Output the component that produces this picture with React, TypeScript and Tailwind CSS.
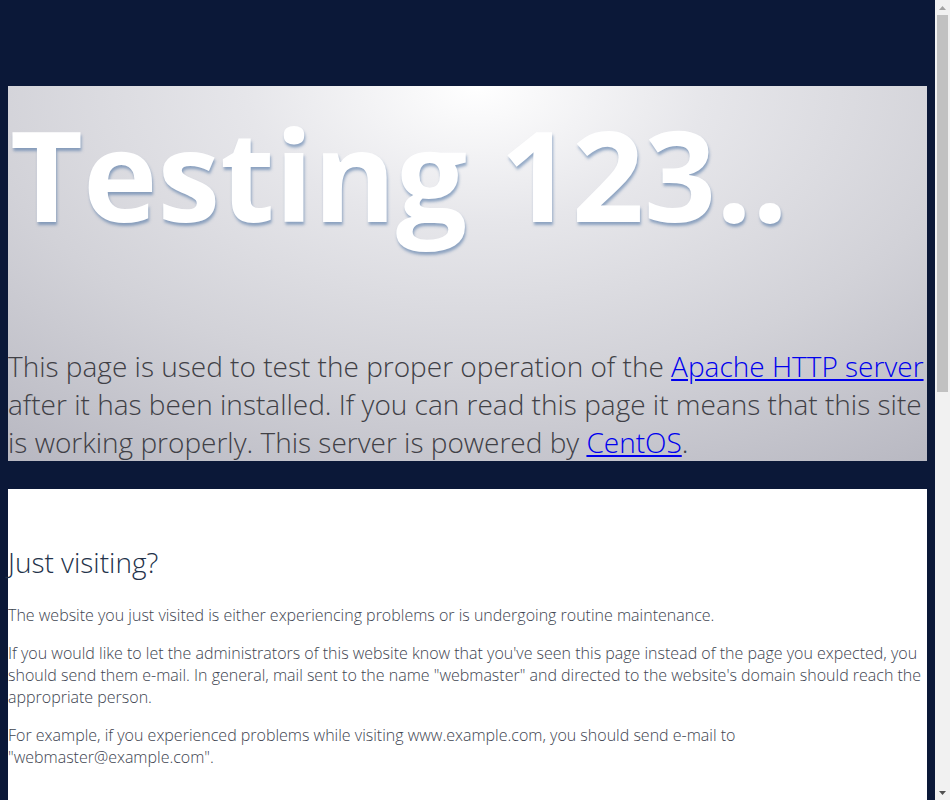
import React from "react";

function FakeScrollbar() {
  return (
    <div className="fixed right-0 top-0 flex h-screen w-[15px] flex-col items-center bg-[#f1f1f1]">
      <div className="flex h-[15px] w-full items-center justify-center">
        <svg width="7" height="4" viewBox="0 0 7 4">
          <polygon points="0,4 3.5,0 7,4" fill="#a3a3a3" />
        </svg>
      </div>
      <div className="h-[377px] w-[11px] bg-[#c1c1c1]" />
      <div className="flex-1" />
      <div className="flex h-[15px] w-full items-center justify-center">
        <svg width="7" height="4" viewBox="0 0 7 4">
          <polygon points="0,0 7,0 3.5,4" fill="#505050" />
        </svg>
      </div>
    </div>
  );
}

export default function App() {
  return (
    <div className="min-h-screen bg-[#0b1838] font-['Open_Sans',sans-serif] font-light">
      <div className="mr-[15px] px-2 pt-[86px] pb-[60px]">
        <div className="bg-[radial-gradient(ellipse_90%_130%_at_51%_0%,#ffffff_0%,#e6e6ea_28%,#d2d2d8_60%,#b4b4be_100%)] pt-[2px]">
          <h1 className="m-0 pl-[2px] text-[126px] leading-[170px] font-bold text-white [text-shadow:1px_3px_3px_rgba(70,110,160,0.55)] whitespace-nowrap">
            Testing 123..
          </h1>
          <p className="mt-[89px] mb-0 text-[28px] leading-[38px] text-[#404046]">
            This page is used to test the proper operation of the{" "}
            <a href="#" className="text-[#0000ee] underline">Apache HTTP server</a> after it has been
            installed. If you can read this page it means that this site is working properly. This
            server is powered by <a href="#" className="text-[#0000ee] underline">CentOS</a>.
          </p>
        </div>
        <div className="mt-[28px] bg-white pt-[52px] pb-[40px] text-[16px] leading-[22px] text-[#3d4450]">
          <h2 className="m-0 text-[28px] leading-normal font-light text-[#23324a]">Just visiting?</h2>
          <p className="mt-[21px] mb-4">
            The website you just visited is either experiencing problems or is undergoing routine maintenance.
          </p>
          <p className="mb-4">
            If you would like to let the administrators of this website know that you've seen this page
            instead of the page you expected, you should send them e-mail. In general, mail sent to the
            name "webmaster" and directed to the website's domain should reach the appropriate person.
          </p>
          <p className="mb-4">
            For example, if you experienced problems while visiting www.example.com, you should send
            e-mail to "webmaster@example.com".
          </p>
          <h2 className="mt-[60px] mb-0 text-[28px] leading-normal font-light text-[#23324a]">
            Are you the Administrator?
          </h2>
          <p className="mt-[21px] mb-4">
            You should add your website content to the directory /var/www/html/.
          </p>
          <p className="mb-4">
            To prevent this page from ever being used, follow the instructions in the file
            /etc/httpd/conf.d/welcome.conf.
          </p>
          <h2 className="mt-[60px] mb-0 text-[28px] leading-normal font-light text-[#23324a]">
            Promoting Apache and CentOS
          </h2>
          <p className="mt-[21px] mb-4">
            You are free to use the images below on Apache and CentOS Linux powered HTTP servers.
            Thanks for using Apache and CentOS!
          </p>
          <div className="flex gap-4 py-4">
            <div className="h-[31px] w-[88px] bg-[#d0d0d8]" />
            <div className="h-[31px] w-[88px] bg-[#d0d0d8]" />
          </div>
          <h2 className="mt-[60px] mb-0 text-[28px] leading-normal font-light text-[#23324a]">
            Important note:
          </h2>
          <p className="mt-[21px] mb-4">
            The CentOS Project has nothing to do with this website or its content, it just provides
            the software that makes the website run.
          </p>
          <p className="mb-4">
            If you have issues with the content of this site, contact the owner of the domain, not
            the CentOS Project. Unless you intended to visit CentOS.org, the CentOS Project does not
            have anything to do with this website, the content or the lack of it.
          </p>
          <p className="mb-4">
            For example, if this website is www.example.com, you would find the owner of the
            example.com domain at the following WHOIS server:
          </p>
          <p className="mb-4">http://www.internic.net/whois.html</p>
        </div>
      </div>
      <FakeScrollbar />
    </div>
  );
}
